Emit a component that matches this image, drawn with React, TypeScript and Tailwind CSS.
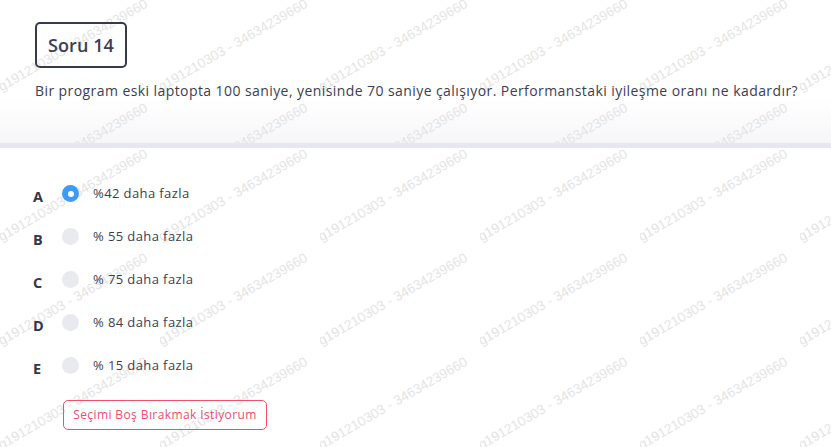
import React from 'react'

const WM_TEXT = 'g191210303 - 34634239660'

// tiled, rotated watermark laid behind a section's content
function Watermark({ rows, offsetTop = 0 }: { rows: number; offsetTop?: number }) {
  const tiles = Array.from({ length: rows * 6 })
  return (
    <div className="pointer-events-none absolute inset-0 overflow-hidden">
      <div className="absolute left-0 flex w-[960px] flex-wrap" style={{ top: offsetTop }}>
        {tiles.map((_, i) => (
          <div key={i} className="h-[104px] w-[160px] shrink-0">
            <div className="relative h-full w-[149px] overflow-hidden">
              <span className="absolute left-[3px] top-[82px] origin-bottom-left -rotate-30 whitespace-nowrap font-['Liberation_Sans',Arial,sans-serif] text-[13.5px] leading-[14px] text-[#e4e4e4]">
                {WM_TEXT}
              </span>
            </div>
          </div>
        ))}
      </div>
    </div>
  )
}

const options = [
  { letter: 'A', text: '%42 daha fazla', selected: true },
  { letter: 'B', text: '% 55 daha fazla', selected: false },
  { letter: 'C', text: '% 75 daha fazla', selected: false },
  { letter: 'D', text: '% 84 daha fazla', selected: false },
  { letter: 'E', text: '% 15 daha fazla', selected: false },
]

export default function App() {
  return (
    <div className="min-h-screen w-full bg-white font-['Open_Sans','Noto_Sans',sans-serif] text-[#3b3e52]">
      {/* Question header */}
      <section className="relative h-[143px] overflow-hidden bg-linear-to-b from-white from-70% to-[#f6f6f9]">
        <Watermark rows={2} offsetTop={-2} />
        <div className="relative pl-[35px] pt-[22px]">
          <div className="inline-flex h-[46px] w-[92px] items-center justify-center rounded-[5px] border-2 border-[#373a4c]">
            <span className="text-[18px] font-semibold tracking-[0.1px]">Soru 14</span>
          </div>
          <p className="mt-[13px] text-[14px] leading-[20px] tracking-[0.42px]">
            Bir program eski laptopta 100 saniye, yenisinde 70 saniye çalışıyor. Performanstaki iyileşme oranı ne kadardır?
          </p>
        </div>
      </section>

      <div className="h-[5px] bg-[#e7e7f1]" />

      {/* Answers */}
      <section className="relative h-[299px] overflow-hidden">
        <Watermark rows={3} />
        <div className="relative pt-[24px]">
          <div className="flex flex-col">
            {options.map((o) => (
              <div key={o.letter} className="flex h-[43px] items-center pl-[33px]">
                <span className="mt-[6px] w-[29px] text-[14.5px] font-bold text-[#34374a]">{o.letter}</span>
                {o.selected ? (
                  <span className="flex h-[17px] w-[17px] items-center justify-center rounded-full bg-[#3d9bfb]">
                    <span className="h-[6px] w-[6px] rounded-full bg-white" />
                  </span>
                ) : (
                  <span className="h-[17px] w-[17px] rounded-full bg-[#e9eaf0]" />
                )}
                <span className="ml-[14px] text-[13px] tracking-[0.4px]">{o.text}</span>
              </div>
            ))}
          </div>
          <button className="ml-[63px] mt-[13px] h-[30px] w-[204px] rounded-[5px] border border-[#f0506e] text-[12px] tracking-[0.4px] text-[#ee4d6b]">
            Seçimi Boş Bırakmak İstiyorum
          </button>
        </div>
      </section>
    </div>
  )
}
